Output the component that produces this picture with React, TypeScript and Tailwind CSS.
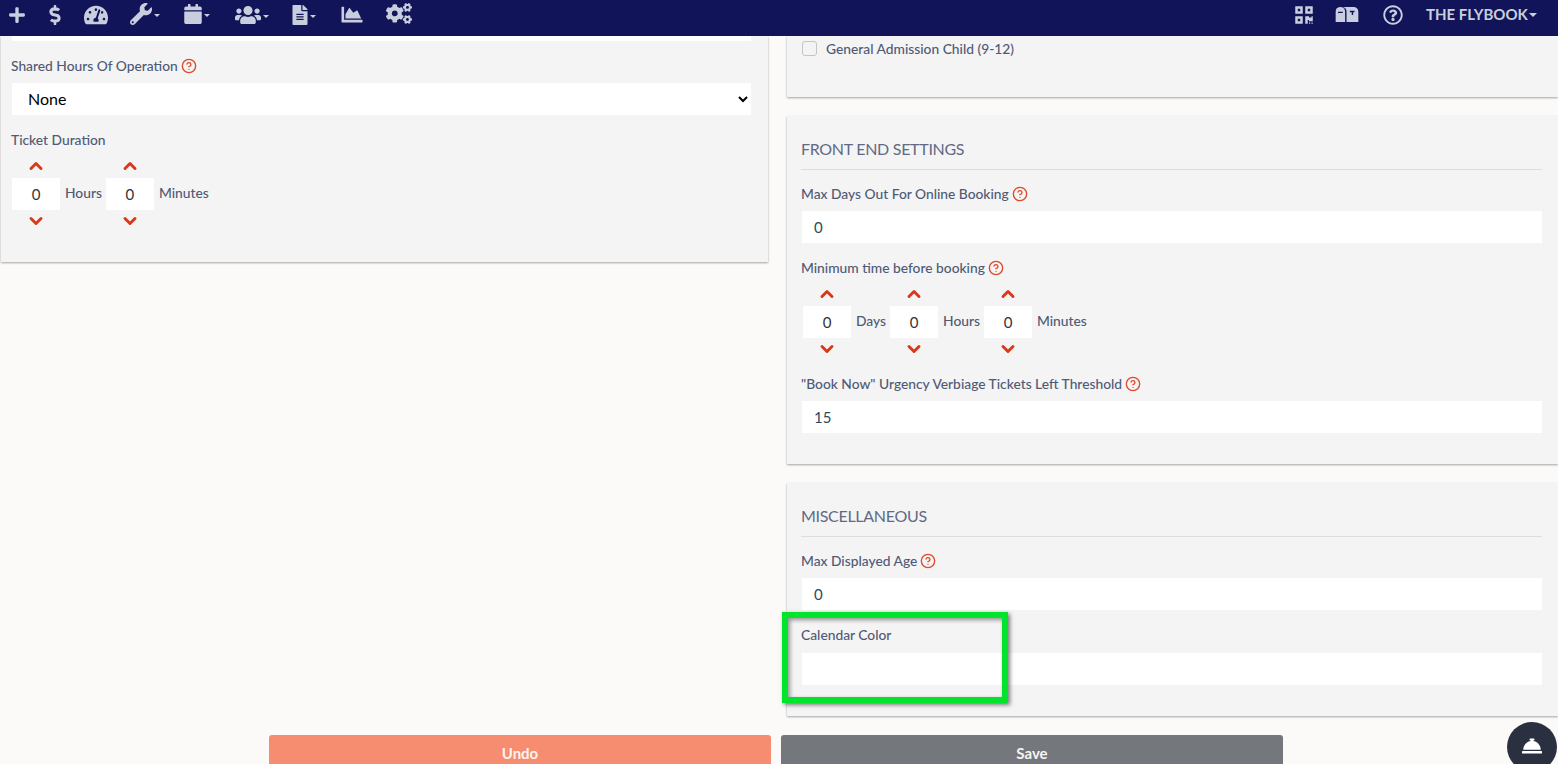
import { FaPlus, FaDollarSign, FaTachometerAlt, FaWrench, FaCalendar, FaUsers, FaFileAlt, FaChartArea, FaCogs, FaRegQuestionCircle, FaConciergeBell, FaQrcode } from 'react-icons/fa';
import { ChevronDown, ChevronUp, CircleHelp } from 'lucide-react';

function Caret() {
  return <span className="ml-[2px] mt-[4px] h-0 w-0 border-x-[3px] border-t-[3px] border-x-transparent border-t-[#c9cede]" />;
}

function Help() {
  return <CircleHelp className="ml-[3px] inline-block h-[16px] w-[16px] text-[#dc4a2c]" strokeWidth={2} />;
}

function Label({ children, help }: { children: React.ReactNode; help?: boolean }) {
  return (
    <div className="flex h-5 items-center text-[13.8px] font-medium leading-5 text-[#4f5a76]">
      {children}
      {help && <Help />}
    </div>
  );
}

function TextBox({ value = '' }: { value?: string }) {
  return <input readOnly value={value} className="block h-8 w-full bg-white pl-[12px] text-[15px] text-[#2b4a5e] outline-none" />;
}

function Spinner({ unit, gap }: { unit: string; gap: string }) {
  return (
    <>
      <div className="flex w-12 flex-col items-center">
        <ChevronUp className="mb-[2px] mt-[-3px] h-5 w-5 text-[#d9391a]" strokeWidth={3.5} />
        <input readOnly value="0" className="h-8 w-12 bg-white text-center text-[15px] text-[#333] outline-none" />
        <ChevronDown className="mb-[-3px] mt-[1px] h-5 w-5 text-[#d9391a]" strokeWidth={3.5} />
      </div>
      <span className={`ml-[5px] text-[13.8px] font-medium text-[#4f5a76] ${gap}`}>{unit}</span>
    </>
  );
}

function Heading({ children }: { children: React.ReactNode }) {
  return <div className="mb-[14px] border-b border-[#dddddd] pb-[9px] text-[16px] leading-[22px] tracking-[-0.3px] text-[#606a85]">{children}</div>;
}

export default function App() {
  return (
    <div className="relative flex h-[764px] w-[1558px] flex-col overflow-hidden bg-[#fbfaf8] font-['Lato',sans-serif]">
      <header className="flex h-9 shrink-0 items-center bg-[#12145a] pb-[7px] text-[#c9cede]">
        <FaPlus className="ml-[8px] h-[18px] w-[18px]" />
        <FaDollarSign className="ml-[19px] h-[20px] w-[20px]" />
        <FaTachometerAlt className="ml-[19px] h-[24px] w-[24px]" />
        <div className="mb-[2px] ml-[22px] flex items-center">
          <FaWrench className="h-[22px] w-[22px]" />
          <Caret />
        </div>
        <div className="mb-[2px] ml-[24px] flex items-center">
          <FaCalendar className="h-[20px] w-[18px]" />
          <Caret />
        </div>
        <div className="ml-[25px] flex items-center">
          <FaUsers className="h-[24px] w-[26px]" />
          <Caret />
        </div>
        <div className="ml-[23px] flex items-center">
          <FaFileAlt className="h-[20px] w-[16px]" />
          <Caret />
        </div>
        <FaChartArea className="ml-[25px] h-[21px] w-[22px]" />
        <FaCogs className="mb-[2px] ml-[23px] h-[25px] w-[26px]" />

        <FaQrcode className="ml-[882px] h-[20px] w-[20px]" />
        <svg viewBox="0 0 24 18" className="ml-[21px] h-[17px] w-[24px]" fill="currentColor">
          <path d="M0 17V6a5 5 0 0 1 10 0v11Z" />
          <path d="M7 1h12a5 5 0 0 1 5 5v11H11.500V6a5 5 0 0 0-4.500-5Z" />
          <path d="M2.500 6h5v1.500h-5ZM15 5h5v1.500h-1.500v3H17v-3h-2Z" fill="#12145a" />
        </svg>
        <FaRegQuestionCircle className="ml-[24px] h-[20px] w-[20px]" />
        <span className="ml-[23px] text-[15px] font-bold">THE FLYBOOK</span>
        <span className="ml-[1px] mt-[1px] h-0 w-0 border-x-[4px] border-t-[4px] border-x-transparent border-t-[#c9cede]" />
      </header>

      <main className="flex h-[699px] shrink-0 items-start">
        <section className="ml-[1px] h-[226px] w-[767px] bg-[#f4f4f4] pl-[11px] pr-[17px] shadow-[0_1px_2px_rgba(0,0,0,0.35)]">
          <div className="h-[5px] bg-white" />
          <div className="ml-[-1px] mt-[15px]">
            <Label help>Shared Hours Of Operation</Label>
          </div>
          <select className="mt-[7px] block h-8 w-full bg-white pb-[2px] pl-[12px] text-[16px] text-black outline-none">
            <option>None</option>
          </select>
          <div className="ml-[-1px] mt-[15px]">
            <Label>Ticket Duration</Label>
          </div>
          <div className="mt-[9px] flex items-center">
            <Spinner unit="Hours" gap="mr-[4px]" />
            <Spinner unit="Minutes" gap="" />
          </div>
        </section>

        <div className="ml-[19px] flex flex-1 flex-col">
          <section className="h-[61px] bg-[#f4f4f4] pl-[15px] shadow-[0_1px_2px_rgba(0,0,0,0.35)]">
            <div className="flex h-6 items-center pt-[2px] text-[13.8px] font-medium text-[#4f5a76]">
              <span className="mb-[2px] mr-[9px] h-[15px] w-[15px] rounded-[3px] border border-[#c4c4c4] bg-[#f4f4f4]" />
              General Admission Child (9-12)
            </div>
          </section>

          <section className="mt-[19px] h-[348px] bg-[#f4f4f4] pl-[14px] pr-[16px] pt-[22px] shadow-[0_1px_2px_rgba(0,0,0,0.35)]">
            <Heading>FRONT END SETTINGS</Heading>
            <Label help>Max Days Out For Online Booking</Label>
            <div className="mt-[7px] pl-[1px]"><TextBox value="0" /></div>
            <div className="mt-[15px]"><Label help>Minimum time before booking</Label></div>
            <div className="ml-[2px] mt-[9px] flex items-center">
              <Spinner unit="Days" gap="mr-[4px]" />
              <Spinner unit="Hours" gap="mr-[4px]" />
              <Spinner unit="Minutes" gap="" />
            </div>
            <div className="mt-[18px]"><Label help>"Book Now" Urgency Verbiage Tickets Left Threshold</Label></div>
            <div className="mt-[7px] pl-[1px]"><TextBox value="15" /></div>
          </section>

          <section className="mt-[19px] h-[233px] bg-[#f4f4f4] pl-[14px] pr-[16px] pt-[22px] shadow-[0_1px_2px_rgba(0,0,0,0.35)]">
            <Heading>MISCELLANEOUS</Heading>
            <Label help>Max Displayed Age</Label>
            <div className="mt-[7px] pl-[1px]"><TextBox value="0" /></div>
            <div className="mt-[15px]"><Label>Calendar Color</Label></div>
            <div className="mt-[8px] pl-[1px]"><TextBox /></div>
          </section>
        </div>
      </main>

      <footer className="flex h-[29px] shrink-0 gap-[10px] pl-[269px]">
        <button className="h-[40px] w-[502px] rounded-t-[3px] bg-[#f68d70] pb-[4px] text-[15px] font-bold text-[#fdf3ef]">Undo</button>
        <button className="h-[40px] w-[502px] rounded-t-[3px] bg-[#74777b] pb-[4px] text-[15px] font-bold text-[#f4f4f4]">Save</button>
      </footer>

      {/* annotation box + chat bubble sit over the page */}
      <div className="absolute left-[782px] top-[612px] h-[91px] w-[226px] border-[6px] border-[#00e52b] shadow-[2px_2px_4px_rgba(0,0,0,0.5),inset_2px_2px_4px_rgba(0,0,0,0.4)]" />
      <div className="absolute left-[1507px] top-[722px] flex h-[50px] w-[50px] items-center justify-center rounded-full bg-[#2a3040] pb-[3px]">
        <FaConciergeBell className="h-[20px] w-[20px] text-white" />
      </div>
    </div>
  );
}
